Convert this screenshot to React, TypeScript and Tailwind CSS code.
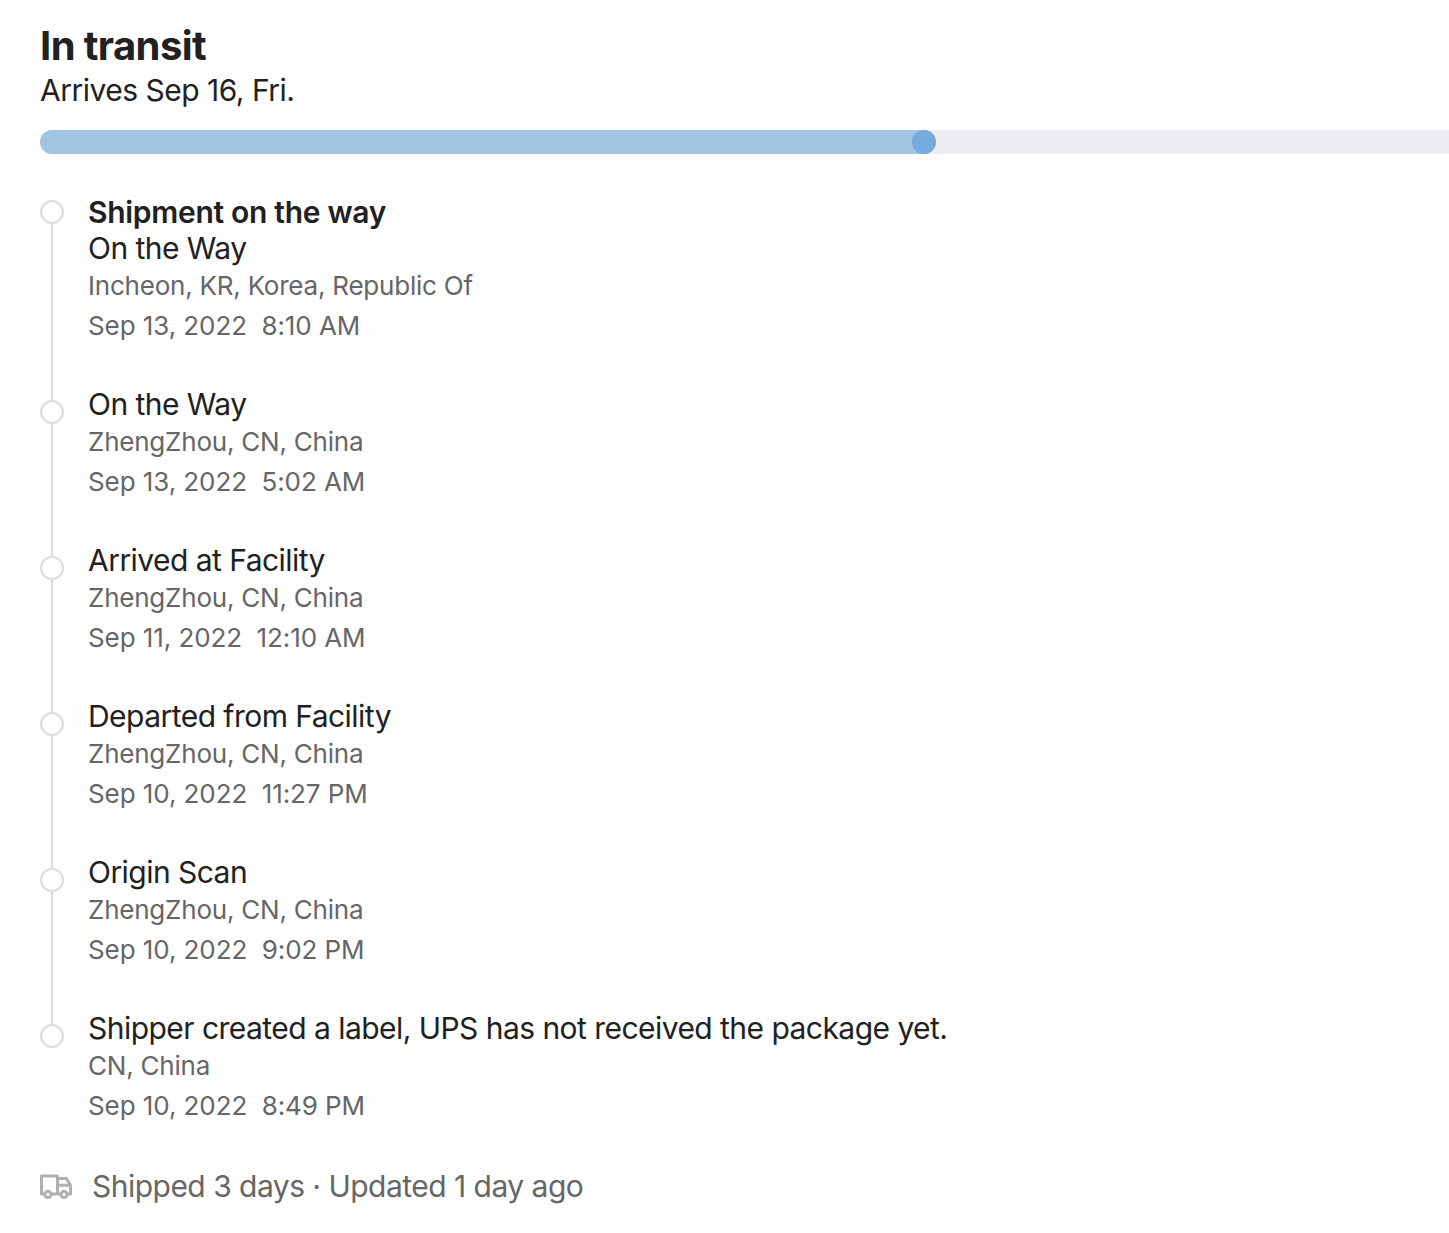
import React from 'react';

interface TrackingEvent {
  heading?: string;
  title: string;
  location: string;
  date: string;
  time: string;
}

const events: TrackingEvent[] = [
  { heading: 'Shipment on the way', title: 'On the Way', location: 'Incheon, KR, Korea, Republic Of', date: 'Sep 13, 2022', time: '8:10 AM' },
  { title: 'On the Way', location: 'ZhengZhou, CN, China', date: 'Sep 13, 2022', time: '5:02 AM' },
  { title: 'Arrived at Facility', location: 'ZhengZhou, CN, China', date: 'Sep 11, 2022', time: '12:10 AM' },
  { title: 'Departed from Facility', location: 'ZhengZhou, CN, China', date: 'Sep 10, 2022', time: '11:27 PM' },
  { title: 'Origin Scan', location: 'ZhengZhou, CN, China', date: 'Sep 10, 2022', time: '9:02 PM' },
  { title: 'Shipper created a label, UPS has not received the package yet.', location: 'CN, China', date: 'Sep 10, 2022', time: '8:49 PM' },
];

const TruckIcon = () => (
  <svg width="32" height="26" viewBox="0 0 32 26" fill="none" stroke="#b0b0b0" strokeWidth="3" strokeLinejoin="round">
    <path d="M4.5 20H1.5V1.9h16V20M11.5 20h9M27.5 20h3v-8.6l-4-7h-9M17.5 11.3h13" />
    <circle cx="7.9" cy="20.4" r="3.1" />
    <circle cx="24" cy="20.4" r="3.1" />
  </svg>
);

const App: React.FC = () => (
  <div className="h-[1233px] w-full overflow-hidden bg-white font-['Inter',sans-serif] text-[#212121]">
    <header className="h-[195px] pl-10 pt-6">
      <h1 className="h-11 text-[40px] font-bold leading-[44px] tracking-[-0.6px]">In transit</h1>
      <p className="h-[62px] pt-1 text-[30px] leading-[36px] tracking-[-0.5px]">Arrives Sep 16, Fri.</p>
      <div className="h-6 rounded-l-full bg-[#edeef2]">
        <div className="flex h-6 w-[896px] justify-end rounded-full bg-[#a2c4e3]">
          <div className="size-6 rounded-full bg-[#76abdc]" />
        </div>
      </div>
    </header>

    <main className="border-t border-[#fcfcfc] bg-[#fefefe] pl-10">
      <ul>
        {events.map((e, i) => (
          <li key={i} className={`flex gap-6 ${e.heading ? 'h-[190px]' : 'h-[156px]'}`}>
            <div className="flex w-6 flex-col items-center">
              <div className={`w-0.5 ${i === 0 ? 'h-1' : 'h-[14px] bg-[#dcdcdc]'}`} />
              <div className="size-6 shrink-0 rounded-full border-2 border-[#dcdcdc] bg-white" />
              {i < events.length - 1 && <div className="w-0.5 grow bg-[#dcdcdc]" />}
            </div>
            <div className={e.heading ? '-mt-0.5' : ''}>
              {e.heading && <h2 className="text-[30px] font-semibold leading-[36px] tracking-[-0.3px]">{e.heading}</h2>}
              <p className="text-[30px] leading-[36px] tracking-[-0.54px]">{e.title}</p>
              <p className="text-[26px] leading-10 tracking-[-0.22px] text-[#666]">{e.location}</p>
              <p className="text-[26px] leading-10 tracking-[-0.08px] text-[#666]">{e.date}&nbsp; {e.time}</p>
            </div>
          </li>
        ))}
      </ul>
      <footer className="flex h-[67px] items-start gap-5 pt-0.5 text-[30px] leading-[36px] tracking-[-0.52px] text-[#666]">
        <div className="pt-1.5"><TruckIcon /></div>
        <p>Shipped 3 days · Updated 1 day ago</p>
      </footer>
    </main>
  </div>
);

export default App;
